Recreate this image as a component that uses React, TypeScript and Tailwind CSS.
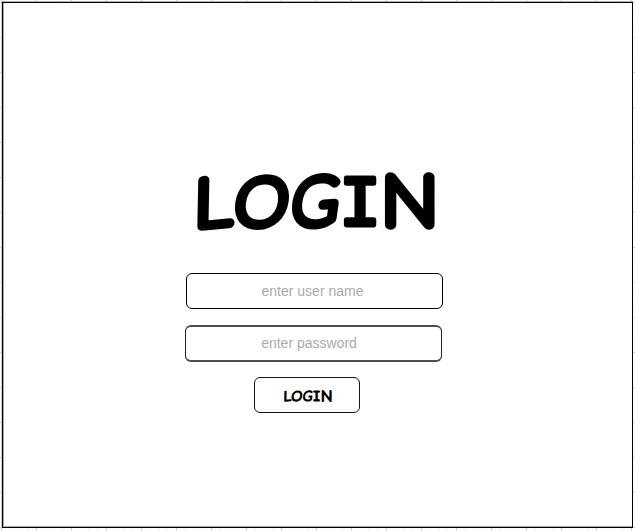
type WordmarkProps = { className: string };

// Rounded, hand-lettered heading: light type thickened by a round stroke.
function Wordmark({ className }: WordmarkProps) {
  return (
    <svg viewBox="0 0 240 58" className={className} role="img" aria-label="LOGIN" overflow="visible">
      <g
        fill="black"
        stroke="black"
        strokeWidth="9"
        strokeLinejoin="round"
        strokeLinecap="round"
        fontFamily="Lato, 'Liberation Sans', sans-serif"
        fontWeight="100"
        fontSize="64"
      >
        <text transform="matrix(1.14 -0.11 -0.02 1.02 -3 54)">L</text>
        <text transform="matrix(1.05 -0.03 -0.14 1.01 35.5 52.5)" strokeWidth="9.5">O</text>
        <text transform="matrix(0.98 -0.05 -0.14 1.02 92.5 52.5)" strokeWidth="9.5">G</text>
        <text transform="matrix(1.04 0 0 1.08 142.5 52)" fontFamily="'Liberation Mono', monospace" fontSize="66" strokeWidth="4.6">I</text>
        <text transform="matrix(1.18 0 0 1.05 184.5 52)">N</text>
      </g>
    </svg>
  );
}

type FieldProps = { label: string; type: string; className: string };

function Field({ label, type, className }: FieldProps) {
  return (
    <input
      type={type}
      placeholder={label}
      className={`block w-[257px] rounded-[6px] bg-white text-center font-['Liberation_Sans',Arial,sans-serif] text-[14px] text-black outline-none placeholder:text-[#aaaaaa] ${className}`}
    />
  );
}

export default function App() {
  return (
    <main className="h-[531px] w-[635px] overflow-hidden bg-white bg-[linear-gradient(to_right,#cfcfcf_1px,transparent_1px),linear-gradient(to_bottom,#cfcfcf_1px,transparent_1px),linear-gradient(to_right,#f1f1f1_1px,transparent_1px),linear-gradient(to_bottom,#f1f1f1_1px,transparent_1px)] bg-[size:35px_35px,35px_35px,8.75px_8.75px,8.75px_8.75px] bg-[position:1px_2px] pl-[2px] pt-px">
      <section className="h-[527px] w-[631px] border-t border-[#b0b0b0]">
        <div className="flex h-[526px] flex-col border border-black bg-white shadow-[inset_1px_-1px_0_#aaaaaa]">
          <h1 className="ml-[194px] mt-[170px] h-[58px] w-[240px]">
            <Wordmark className="block h-[58px] w-[240px]" />
          </h1>
          <form className="ml-[183px] mt-[42px] w-[257px]" onSubmit={(event) => event.preventDefault()}>
            <Field label="enter user name" type="text" className="h-9 border border-black pr-[4px]" />
            <div className="-ml-px mt-4">
              <Field label="enter password" type="password" className="h-[37px] border-x border-y-2 border-x-[#222222] border-y-[#4d4d4d] pb-px pr-[9px]" />
            </div>
            <button type="submit" className="ml-[68px] mt-[15px] flex h-9 w-[106px] items-center justify-center rounded-[6px] border border-[#151515] bg-white pl-[2px] pt-[2px]">
              <Wordmark className="block h-[12px] w-[48px]" />
            </button>
          </form>
        </div>
      </section>
    </main>
  );
}
